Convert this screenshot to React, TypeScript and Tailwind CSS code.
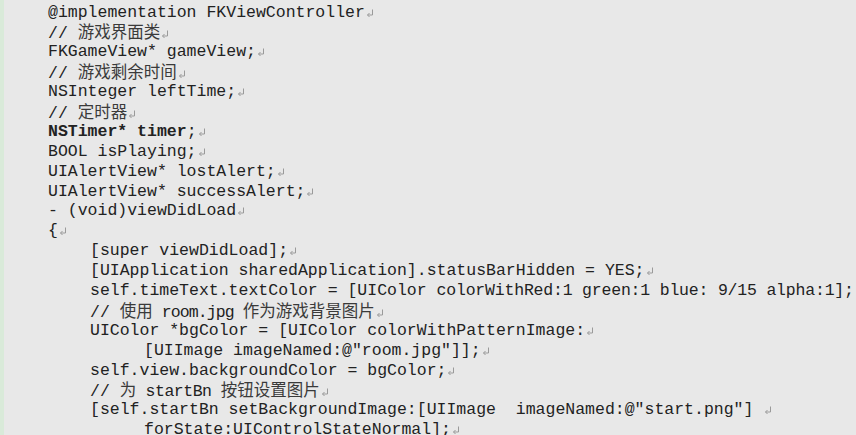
import React from 'react';

const mono = "font-['Liberation_Mono','Courier_New','Noto_Sans_CJK_SC',monospace]";
const cjk = "font-['Noto_Sans_CJK_SC',sans-serif] text-[#3a3a3a]";

// paragraph mark drawn after each line
function Mark() {
  return (
    <svg width="8" height="8" viewBox="0 0 8 8" className="ml-[1px] inline-block align-baseline">
      <path d="M6.5 0.5 V6 H1.5" fill="none" stroke="#9a9a9a" strokeWidth="1" />
      <path d="M3.5 4 L1.5 6 L3.5 8" fill="none" stroke="#9a9a9a" strokeWidth="1" />
    </svg>
  );
}

function Line({
  indent = 0,
  mark = true,
  children,
}: {
  indent?: 0 | 1 | 2;
  mark?: boolean;
  children: React.ReactNode;
}) {
  // text column starts after the 4px strip
  const pad = indent === 0 ? 'pl-[44px]' : indent === 1 ? 'pl-[86px]' : 'pl-[140px]';
  return (
    <div className={`h-[19.9px] whitespace-pre ${pad}`}>
      {children}
      {mark && <Mark />}
    </div>
  );
}

function Zh({ children }: { children: React.ReactNode }) {
  return <span className={cjk}>{children}</span>;
}

export default function App() {
  return (
    <div className="flex h-[435px] w-[856px] overflow-hidden bg-[#e8e8e8]">
      <div className="w-[4px] shrink-0 bg-[#d9ead9]" />
      <div className={`flex-1 pt-[2.5px] text-[16.5px] leading-[19.9px] text-[#222] ${mono}`}>
        <Line>@implementation FKViewController</Line>
        <Line>
          {'// '}
          <Zh>游戏界面类</Zh>
        </Line>
        <Line>FKGameView* gameView;</Line>
        <Line>
          {'// '}
          <Zh>游戏剩余时间</Zh>
        </Line>
        <Line>NSInteger leftTime;</Line>
        <Line>
          {'// '}
          <Zh>定时器</Zh>
        </Line>
        <Line>
          <span className="font-bold">NSTimer* timer</span>;
        </Line>
        <Line>BOOL isPlaying;</Line>
        <Line>UIAlertView* lostAlert;</Line>
        <Line>UIAlertView* successAlert;</Line>
        <Line>- (void)viewDidLoad</Line>
        <Line>{'{'}</Line>
        <Line indent={1}>[super viewDidLoad];</Line>
        <Line indent={1}>[UIApplication sharedApplication].statusBarHidden = YES;</Line>
        <Line indent={1} mark={false}>
          {'self.timeText.textColor = [UIColor '}
          <span className="tracking-[-0.2px]">colorWithRed:1 green:1 blue: 9/15 alpha:1];</span>
        </Line>
        <Line indent={1}>
          {'// '}
          <Zh>使用</Zh>
          <span className="tracking-[-0.9px]">{' room.jpg '}</span>
          <Zh>作为游戏背景图片</Zh>
        </Line>
        <Line indent={1}>UIColor *bgColor = [UIColor colorWithPatternImage:</Line>
        <Line indent={2}>[UIImage imageNamed:@"room.jpg"]];</Line>
        <Line indent={1}>self.view.backgroundColor = bgColor;</Line>
        <Line indent={1}>
          {'// '}
          <Zh>为</Zh>
          <span className="tracking-[-0.5px]">{' startBn '}</span>
          <Zh>按钮设置图片</Zh>
        </Line>
        <Line indent={1}>{'[self.startBn setBackgroundImage:[UIImage  imageNamed:@"start.png"] '}</Line>
        <Line indent={2}>forState:UIControlStateNormal];</Line>
      </div>
    </div>
  );
}
